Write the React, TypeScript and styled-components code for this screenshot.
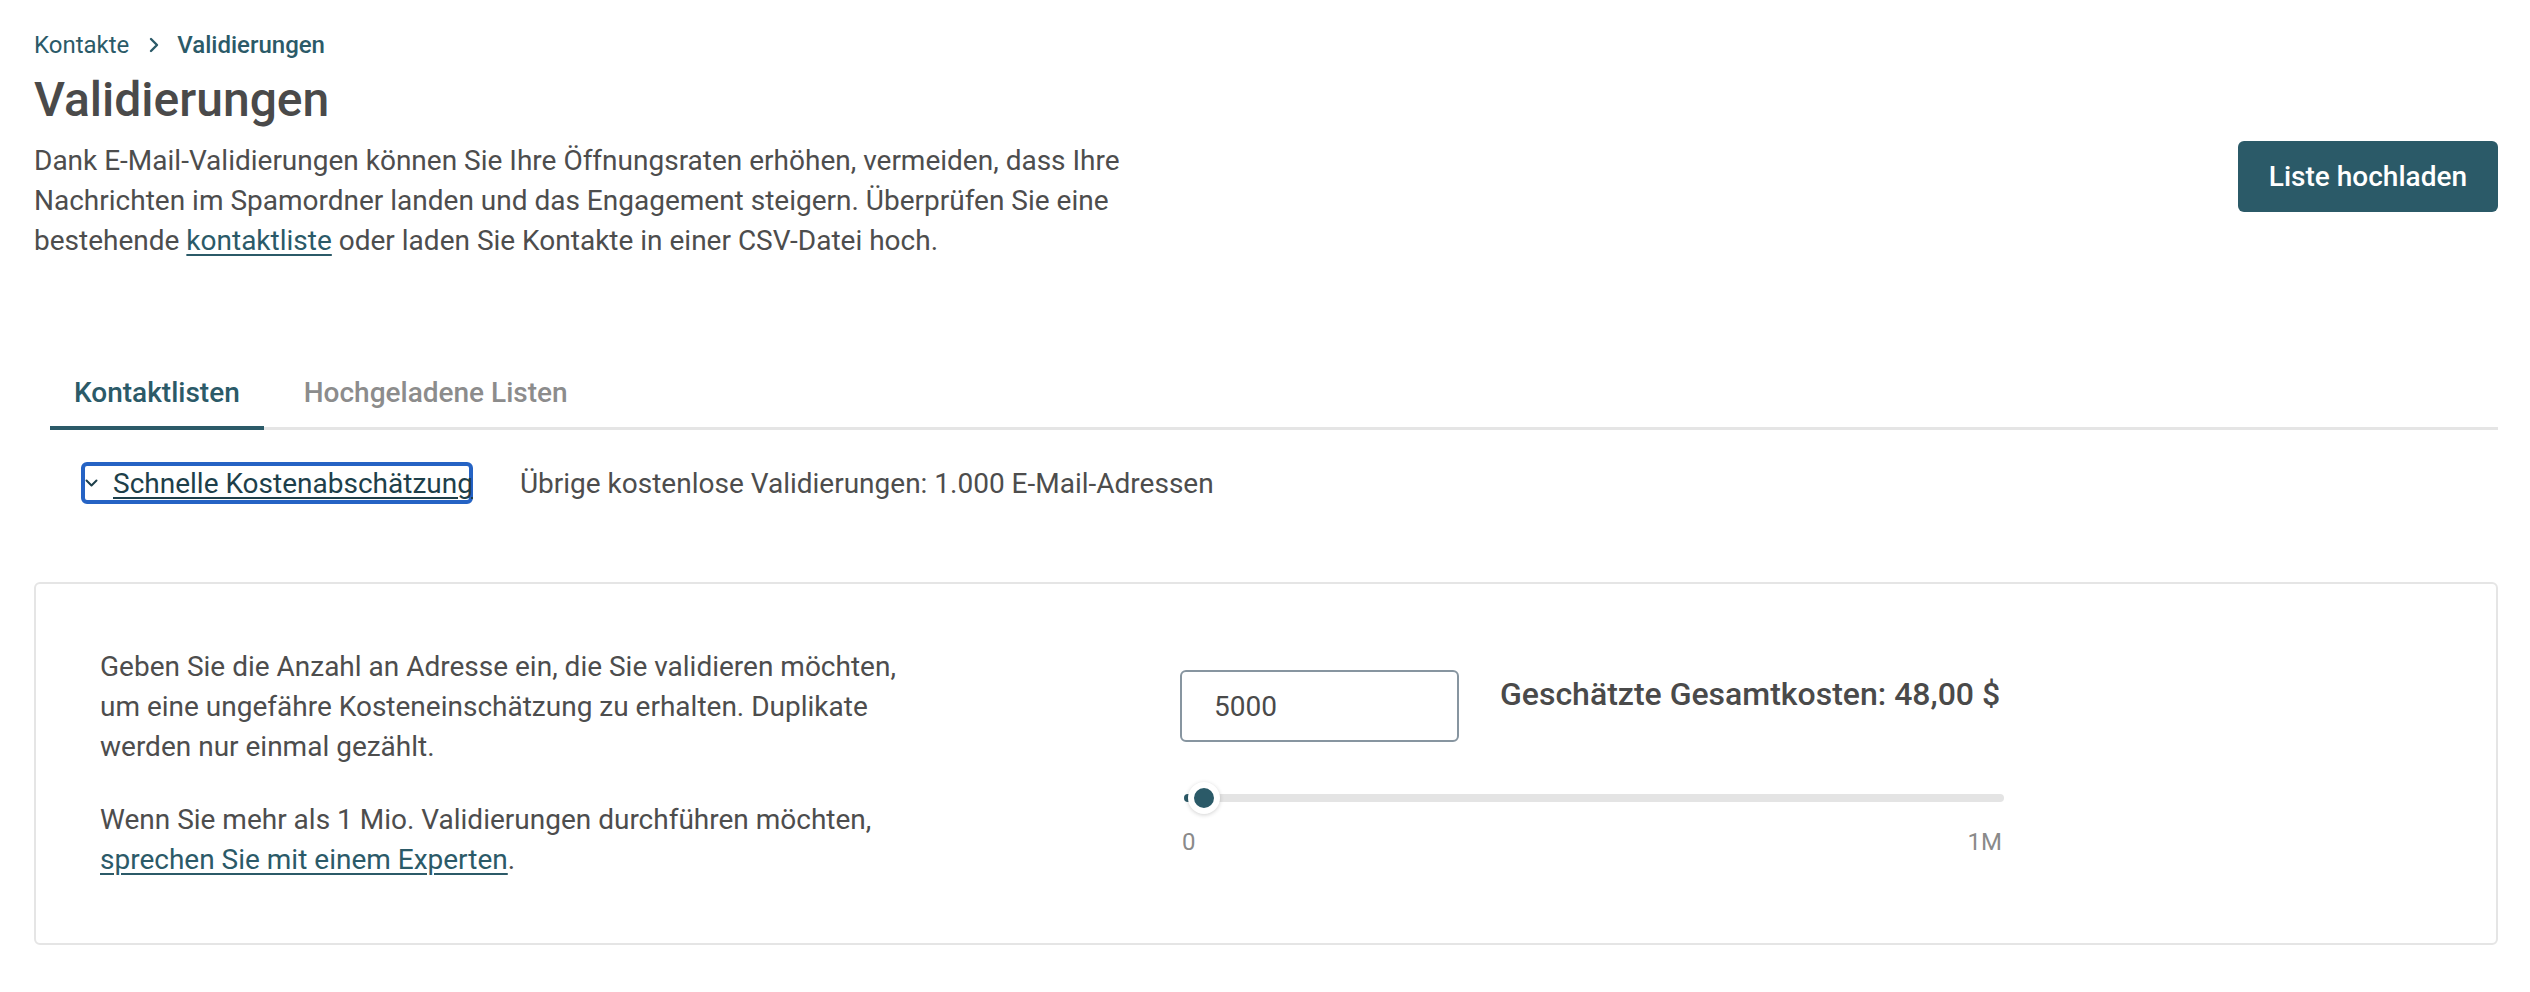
import React, { useState } from "react";
import styled, { createGlobalStyle } from "styled-components";

const GlobalStyle = createGlobalStyle`
    html, body {
        margin: 0;
        padding: 0;
        background: #FFFFFF;
    }
    body {
        font-family: Roboto, "Liberation Sans", Arial, sans-serif;
        color: #4d4d4d;
        -webkit-font-smoothing: antialiased;
    }
    * {
        box-sizing: border-box;
    }
`;

const Page = styled.div`
    padding: 27px 32px 48px 34px;
`;

const Breadcrumbs = styled.nav`
    display: flex;
    align-items: center;
    font-size: 24px;
    line-height: 36px;
    color: #2b5a68;
`;

const Crumb = styled.a<{current?: boolean}>`
    color: #2b5a68;
    text-decoration: none;
    font-weight: ${({current}) => current ? 500 : 400};
`;

const CrumbSeparator = styled.span`
    display: inline-flex;
    margin: 0 18px 0 20px;
`;

const Title = styled.h1`
    margin: 8px 0 12px;
    font-size: 48px;
    line-height: 58px;
    font-weight: 500;
    color: #4a4a4a;
`;

const HeaderRow = styled.div`
    display: flex;
    justify-content: space-between;
    align-items: flex-start;
`;

const Intro = styled.p`
    margin: 0;
    max-width: 1150px;
    font-size: 28px;
    line-height: 40px;
    color: #4d4d4d;
`;

const TextLink = styled.a`
    color: #2b5a68;
    text-decoration: underline;
    text-underline-offset: 4px;
    text-decoration-thickness: 2px;
`;

const PrimaryButton = styled.button`
    flex: 0 0 auto;
    height: 71px;
    padding: 0 31px;
    border: none;
    border-radius: 6px;
    background: #2b5a68;
    color: #FFFFFF;
    font-family: inherit;
    font-size: 28px;
    font-weight: 500;
    cursor: pointer;
`;

const TabList = styled.div`
    display: flex;
    gap: 16px;
    margin: 94px 0 0 16px;
    box-shadow: inset 0 -3px 0 #e5e5e5;
`;

const Tab = styled.button<{active?: boolean}>`
    padding: 20px 24px 15px;
    border: none;
    border-bottom: 4px solid ${({active}) => active ? '#2b5a68' : 'transparent'};
    background: none;
    font-family: inherit;
    font-size: 28px;
    line-height: 36px;
    font-weight: 500;
    color: ${({active}) => active ? '#2b5a68' : '#8c8c8c'};
    cursor: pointer;
`;

const EstimateRow = styled.div`
    display: flex;
    align-items: center;
    gap: 47px;
    margin: 32px 0 0 47px;
`;

const ToggleButton = styled.button`
    display: flex;
    align-items: center;
    gap: 15px;
    height: 42px;
    padding: 0;
    border: 4px solid #2563c4;
    border-radius: 6px;
    background: none;
    font-family: inherit;
    font-size: 28px;
    cursor: pointer;
`;

const ToggleLabel = styled.span`
    color: #1d3f4a;
    text-decoration: underline;
    text-underline-offset: 4px;
    text-decoration-thickness: 2px;
    white-space: nowrap;
    margin-right: -4px;
`;

const FreeInfo = styled.span`
    font-size: 28px;
    color: #4d4d4d;
`;

const Card = styled.section`
    display: grid;
    grid-template-columns: 1080px 824px;
    align-items: center;
    margin-top: 78px;
    padding: 63px 64px;
    border: 2px solid #e5e5e5;
    border-radius: 6px;
`;

const HelpText = styled.div`
    max-width: 820px;
    font-size: 28px;
    line-height: 40px;
    color: #4d4d4d;

    p {
        margin: 0;
    }
    p + p {
        margin-top: 33px;
    }
`;

const Calculator = styled.div`
    display: flex;
    flex-direction: column;
`;

const InputRow = styled.div`
    display: flex;
    align-items: flex-start;
    gap: 41px;
`;

const CountInput = styled.input`
    width: 279px;
    height: 72px;
    padding: 0 32px;
    border: 2px solid #8795a0;
    border-radius: 6px;
    font-family: inherit;
    font-size: 28px;
    color: #4a4a4a;
    outline: none;
`;

const Total = styled.div`
    padding-top: 4px;
    font-size: 32px;
    line-height: 40px;
    font-weight: 500;
    color: #4a4a4a;
    white-space: nowrap;
`;

const SliderTrack = styled.div`
    position: relative;
    width: 820px;
    height: 8px;
    margin: 52px 0 0 4px;
    border-radius: 4px;
    background: #e4e4e4;
`;

const SliderFill = styled.div`
    height: 100%;
    border-radius: 4px;
    background: #2b5a68;
`;

const SliderThumb = styled.div`
    position: absolute;
    top: 50%;
    width: 32px;
    height: 32px;
    margin-top: -16px;
    border: 6px solid #FFFFFF;
    border-radius: 50%;
    background: #2b5a68;
    box-shadow: 0 1px 4px rgba(0, 0, 0, 0.18);
`;

const SliderScale = styled.div`
    display: flex;
    justify-content: space-between;
    width: 820px;
    margin: 25px 0 0 2px;
    font-size: 24px;
    line-height: 30px;
    color: #8a8a8a;
`;

const ChevronRight = () => (
    <svg width="10" height="16" viewBox="0 0 10 16" fill="none">
        <path d="M2 2l6 6-6 6" stroke="#2b5a68" strokeWidth="2.4" strokeLinecap="round" strokeLinejoin="round"/>
    </svg>
);

const ChevronDown = () => (
    <svg width="13" height="8" viewBox="0 0 13 8" fill="none">
        <path d="M1.5 1.5l5 5 5-5" stroke="#1d3f4a" strokeWidth="2" strokeLinecap="round" strokeLinejoin="round"/>
    </svg>
);

const MAX = 1000000;

const App = () => {
    const [count, setCount] = useState("5000");
    const value = Math.min(Math.max(Number(count) || 0, 0), MAX);
    const pct = value / MAX;
    const thumbLeft = pct * (820 - 38);
    const total = (value * 0.0096).toFixed(2).replace(".", ",");

    return (
        <Page>
            <GlobalStyle/>
            <Breadcrumbs>
                <Crumb href="#">Kontakte</Crumb>
                <CrumbSeparator><ChevronRight/></CrumbSeparator>
                <Crumb current>Validierungen</Crumb>
            </Breadcrumbs>
            <Title>Validierungen</Title>
            <HeaderRow>
                <Intro>
                    Dank E-Mail-Validierungen können Sie Ihre Öffnungsraten erhöhen, vermeiden, dass Ihre
                    Nachrichten im Spamordner landen und das Engagement steigern. Überprüfen Sie eine
                    bestehende <TextLink href="#">kontaktliste</TextLink> oder laden Sie Kontakte in einer CSV-Datei hoch.
                </Intro>
                <PrimaryButton>Liste hochladen</PrimaryButton>
            </HeaderRow>

            <TabList>
                <Tab active>Kontaktlisten</Tab>
                <Tab>Hochgeladene Listen</Tab>
            </TabList>

            <EstimateRow>
                <ToggleButton>
                    <ChevronDown/>
                    <ToggleLabel>Schnelle Kostenabschätzung</ToggleLabel>
                </ToggleButton>
                <FreeInfo>Übrige kostenlose Validierungen: 1.000 E-Mail-Adressen</FreeInfo>
            </EstimateRow>

            <Card>
                <HelpText>
                    <p>
                        Geben Sie die Anzahl an Adresse ein, die Sie validieren möchten, um eine ungefähre
                        Kosteneinschätzung zu erhalten. Duplikate werden nur einmal gezählt.
                    </p>
                    <p>
                        Wenn Sie mehr als 1 Mio. Validierungen durchführen möchten,{" "}
                        <TextLink href="#">sprechen Sie mit einem Experten</TextLink>.
                    </p>
                </HelpText>
                <Calculator>
                    <InputRow>
                        <CountInput value={count} onChange={e => setCount(e.target.value)}/>
                        <Total>Geschätzte Gesamtkosten: {total} $</Total>
                    </InputRow>
                    <SliderTrack>
                        <SliderFill style={{width: `${thumbLeft + 16}px`}}/>
                        <SliderThumb style={{left: `${thumbLeft}px`}}/>
                    </SliderTrack>
                    <SliderScale>
                        <span>0</span>
                        <span>1M</span>
                    </SliderScale>
                </Calculator>
            </Card>
        </Page>
    );
};

export default App;
